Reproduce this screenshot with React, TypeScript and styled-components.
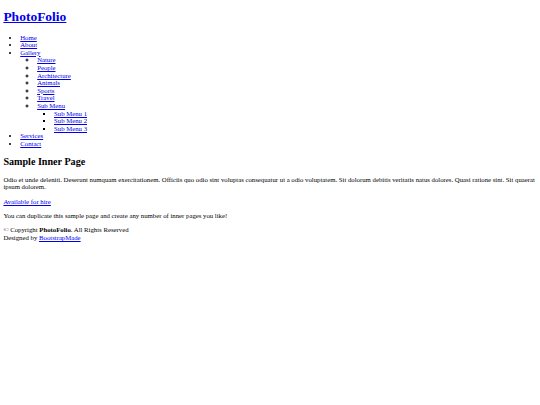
import React from 'react'
import styled, { createGlobalStyle } from 'styled-components'

// the reference is a bare, unstyled page taken at 1280px wide and shrunk to 540px
const SCALE = 540 / 1280
const px = (n: number) => `${n * SCALE}px`

const GlobalStyle = createGlobalStyle`
  html {
    background: #ffffff;
  }
  body {
    margin: 0 ${px(8)} ${px(8)};
    font-family: "Liberation Serif", "Times New Roman", serif;
    font-size: ${px(16)};
    line-height: ${px(18)};
    color: #000000;
  }
`

const Link = styled.a`
  color: #0000ee;
  text-decoration: underline;
  cursor: pointer;
`

const SiteTitle = styled.h1`
  font-size: ${px(32)};
  line-height: ${px(37)};
  font-weight: bold;
  margin: ${px(21.44)} 0;
`

const NavList = styled.ul<{ $level: number }>`
  margin: ${({ $level }) => ($level === 0 ? `${px(16)} 0` : '0')};
  padding-left: ${px(40)};
  list-style-type: ${({ $level }) => ['disc', 'circle', 'square'][$level] || 'square'};
`

const NavItem = styled.li`
  display: list-item;
`

const PageTitle = styled.h2`
  font-size: ${px(24)};
  line-height: ${px(27)};
  font-weight: bold;
  margin: ${px(19.92)} 0;
`

const Paragraph = styled.p`
  margin: ${px(16)} 0;
`

const FooterLine = styled.div`
  display: block;
`

type MenuEntry = { label: string; children?: MenuEntry[] }

const menu: MenuEntry[] = [
  { label: 'Home' },
  { label: 'About' },
  {
    label: 'Gallery',
    children: [
      { label: 'Nature' },
      { label: 'People' },
      { label: 'Architecture' },
      { label: 'Animals' },
      { label: 'Sports' },
      { label: 'Travel' },
      {
        label: 'Sub Menu',
        children: [{ label: 'Sub Menu 1' }, { label: 'Sub Menu 2' }, { label: 'Sub Menu 3' }],
      },
    ],
  },
  { label: 'Services' },
  { label: 'Contact' },
]

const Menu = ({ items, level }: { items: MenuEntry[]; level: number }) => (
  <NavList $level={level}>
    {items.map((item) => (
      <NavItem key={item.label}>
        <Link href="#">{item.label}</Link>
        {item.children && <Menu items={item.children} level={level + 1} />}
      </NavItem>
    ))}
  </NavList>
)

const App = () => {
  return (
    <>
      <GlobalStyle />
      <header>
        <SiteTitle>
          <Link href="#">PhotoFolio</Link>
        </SiteTitle>
        <nav>
          <Menu items={menu} level={0} />
        </nav>
      </header>
      <main>
        <PageTitle>Sample Inner Page</PageTitle>
        <Paragraph>
          Odio et unde deleniti. Deserunt numquam exercitationem. Officiis quo odio sint voluptas consequatur ut a
          odio voluptatem. Sit dolorum debitis veritatis natus dolores. Quasi ratione sint. Sit quaerat ipsum dolorem.
        </Paragraph>
        <Paragraph>
          <Link href="#">Available for hire</Link>
        </Paragraph>
        <Paragraph>You can duplicate this sample page and create any number of inner pages you like!</Paragraph>
      </main>
      <footer>
        <FooterLine>
          © Copyright <strong>PhotoFolio</strong>. All Rights Reserved
        </FooterLine>
        <FooterLine>
          Designed by <Link href="#">BootstrapMade</Link>
        </FooterLine>
      </footer>
    </>
  )
}

export default App
